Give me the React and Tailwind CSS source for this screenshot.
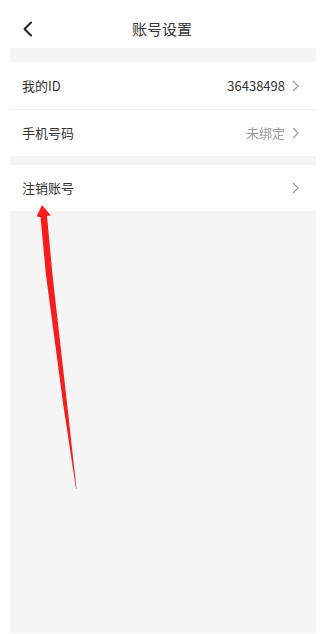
import React from "react";

const Chevron = () => (
  <svg width="7" height="12" viewBox="0 0 7 12" fill="none">
    <path d="M1 1 L6 6 L1 11" stroke="#9a9a9a" strokeWidth="1.1" strokeLinejoin="round" />
  </svg>
);

const Row = ({ label, value, valueClass = "text-[#333]", divider = false }) => (
  <div
    className={`flex items-center justify-between bg-white pl-[12px] pr-[17px] ${
      divider ? "h-[48px] border-b border-[#f0f0f0]" : "h-[46px]"
    }`}
  >
    <span className="text-[13px] text-[#333]">{label}</span>
    <div className="flex items-center gap-[7px]">
      {value && <span className={`text-[13px] ${valueClass}`}>{value}</span>}
      <Chevron />
    </div>
  </div>
);

export default function App() {
  return (
    <div
      className="relative w-[316px] h-[634px] bg-white overflow-hidden"
      style={{ fontFamily: '"Noto Sans CJK SC", "Noto Sans", sans-serif' }}
    >
      {/* header */}
      <div className="flex items-center h-[48px] pt-[10px]">
        <div className="w-[60px] pl-[22px] flex items-center">
          <svg width="11" height="16" viewBox="0 0 11 16" fill="none">
            <path d="M9 1.5 L2.5 8 L9 14.5" stroke="#222" strokeWidth="2" strokeLinecap="round" strokeLinejoin="round" />
          </svg>
        </div>
        <div className="flex-1 text-center text-[15px] text-[#333]">账号设置</div>
        <div className="w-[52px]" />
      </div>

      {/* content */}
      <div className="ml-[10px] h-[585px] bg-[#f5f5f5] flex flex-col pt-[14px]">
        <Row label="我的ID" value="36438498" divider />
        <Row label="手机号码" value="未绑定" valueClass="text-[#999]" />
        <div className="h-[9px]" />
        <Row label="注销账号" />
      </div>

      {/* annotation arrow */}
      <svg className="absolute inset-0 pointer-events-none" width="316" height="634" viewBox="0 0 316 634">
        <polygon
          points="42,205 50.8,215.5 47,216 52.5,275 67,403 76.5,489 76,489 63,403 46,275 40.5,217 36.6,216.5"
          fill="#f71d1d"
        />
      </svg>
    </div>
  );
}
